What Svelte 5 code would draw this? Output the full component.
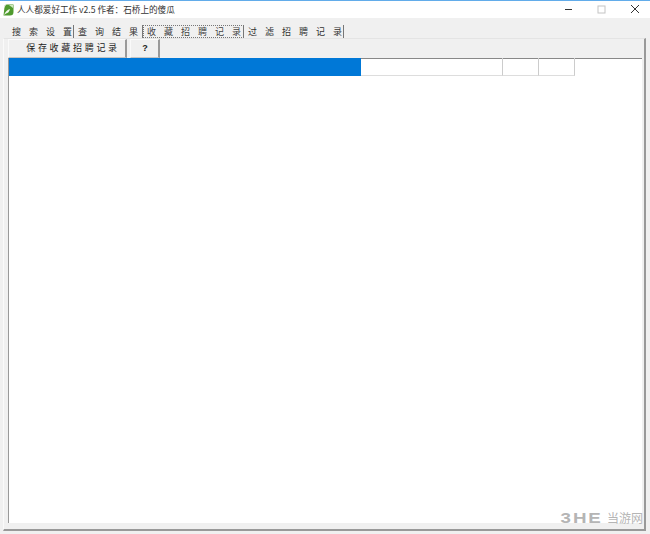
<script>
  const tabs = [
    { label: '搜索设置', width: 66 },
    { label: '查询结果', width: 69 },
    { label: '收藏招聘记录', width: 101, active: true },
    { label: '过滤招聘记录', width: 100 }
  ];
  const cols = [
    { width: 352, selected: true },
    { width: 142 },
    { width: 36 },
    { width: 36 }
  ];
</script>

<div class="window">
  <header class="titlebar">
    <svg class="app-icon" width="11" height="12" viewBox="0 0 11 12">
      <path d="M1.5 3 Q1 0.5 4 0.5 H10.5 V8 Q10.5 11.5 7 11.5 H0.5 Z" fill="#4f9a2e" />
      <path d="M6 1 H10 V4 Z" fill="#cfe8bd" />
      <path d="M1 11 Q3 6 7 5 Q6 9 3 9.5 Z" fill="#f2f8ec" />
      <path d="M1 1 L3 1 L1 4 Z" fill="#dfe6da" />
    </svg>
    <span class="title">人人都爱好工作 v2.5 作者：石桥上的傻瓜</span>
    <div class="controls">
      <svg width="9" height="9" viewBox="0 0 9 9"><path d="M1 4.5H8" stroke="#333" stroke-width="1" /></svg>
      <svg width="9" height="9" viewBox="0 0 9 9"><rect x="1" y="1" width="7" height="7" fill="none" stroke="#c4c4c4" /></svg>
      <svg width="10" height="10" viewBox="0 0 10 10"><path d="M1 1L9 9M9 1L1 9" stroke="#333" stroke-width="1" /></svg>
    </div>
  </header>

  <div class="client">
    <nav class="tabs">
      {#each tabs as tab}
        <div class="tab" class:active={tab.active} style="width: {tab.width}px">
          <span class="tab-text">{tab.label}</span>
        </div>
      {/each}
    </nav>

    <div class="page">
      <div class="toolbar">
        <div class="btn save">保存收藏招聘记录</div>
        <div class="btn help">?</div>
      </div>
      <div class="list">
        <div class="row">
          {#each cols as col}
            <div class="cell" class:selected={col.selected} style="width: {col.width}px"></div>
          {/each}
        </div>
      </div>
    </div>
  </div>

  <div class="watermark">
    <span class="wm-logo">3HE</span>
    <span class="wm-text">当游网</span>
  </div>
</div>

<style>
  :global(body) {
    margin: 0;
    background: #f0f0f0;
  }

  .window {
    position: relative;
    width: 650px;
    height: 534px;
    display: flex;
    flex-direction: column;
    font-family: "Noto Sans CJK SC", "Liberation Sans", sans-serif;
    color: #222;
    overflow: hidden;
    box-sizing: border-box;
    border-top: 1px solid #62acea;
  }

  .titlebar {
    height: 17px;
    background: #fff;
    display: flex;
    align-items: center;
    padding-left: 3px;
    flex: none;
  }

  .app-icon {
    margin-right: 3px;
  }

  .title {
    font-size: 8.6px;
    line-height: 17px;
    color: #333;
  }

  .controls {
    margin-left: auto;
    display: flex;
    align-items: center;
    gap: 24px;
    padding-right: 10px;
    padding-bottom: 1px;
  }

  .client {
    flex: 1;
    display: flex;
    flex-direction: column;
    padding: 7px 4px 3px 3px;
    min-height: 0;
  }

  .tabs {
    display: flex;
    height: 13px;
    padding-left: 5px;
    flex: none;
  }

  .tab {
    box-sizing: border-box;
    height: 13px;
    border-right: 1px solid #777;
    font-size: 9px;
    line-height: 13px;
    padding-left: 4px;
    white-space: nowrap;
    color: #333;
  }

  .tab-text {
    letter-spacing: 8px;
  }

  .tab.active {
    outline: 1px dotted #777;
    outline-offset: -1px;
    color: #444;
  }

  .page {
    flex: 1;
    display: flex;
    flex-direction: column;
    border-right: 2px solid #999;
    border-bottom: 2px solid #999;
    border-top: 1px solid #e4e4e4;
    border-left: 1px solid #fafafa;
    padding-left: 4px;
    min-height: 0;
  }

  .toolbar {
    display: flex;
    height: 19px;
    flex: none;
    gap: 3px;
  }

  .btn {
    box-sizing: border-box;
    height: 19px;
    border-top: 1px solid #fafafa;
    border-left: 1px solid #fafafa;
    border-right: 2px solid #999;
    border-bottom: 1px solid #c4c4c4;
    font-size: 9px;
    line-height: 16px;
    text-align: center;
    background: #f0f0f0;
  }

  .save {
    width: 119px;
    padding-left: 12px;
    letter-spacing: 2.7px;
  }

  .help {
    width: 30px;
    padding-left: 1px;
    font-weight: 700;
    font-family: "Liberation Sans", sans-serif;
  }

  .list {
    flex: 1;
    background: #fff;
    border-top: 1px solid #888;
    border-left: 1px solid #999;
    margin-right: 2px;
    margin-bottom: 6px;
    box-sizing: border-box;
    min-height: 0;
  }

  .row {
    display: flex;
    height: 18px;
    margin-top: -1px;
  }

  .cell {
    box-sizing: border-box;
    border-right: 1px solid #ccc;
    border-bottom: 1px solid #ddd;
  }

  .cell.selected {
    background: #0078d7;
    border-color: #0078d7;
  }

  .watermark {
    position: absolute;
    right: 7px;
    bottom: 9px;
    display: flex;
    align-items: center;
    gap: 4px;
    color: #b5b5b5;
  }

  .wm-logo {
    font-family: "Liberation Sans", sans-serif;
    font-weight: 700;
    font-size: 15px;
    letter-spacing: 1.5px;
    transform: scaleX(1.25);
    transform-origin: right center;
    line-height: 14px;
  }

  .wm-text {
    font-size: 12px;
    line-height: 14px;
  }
</style>
